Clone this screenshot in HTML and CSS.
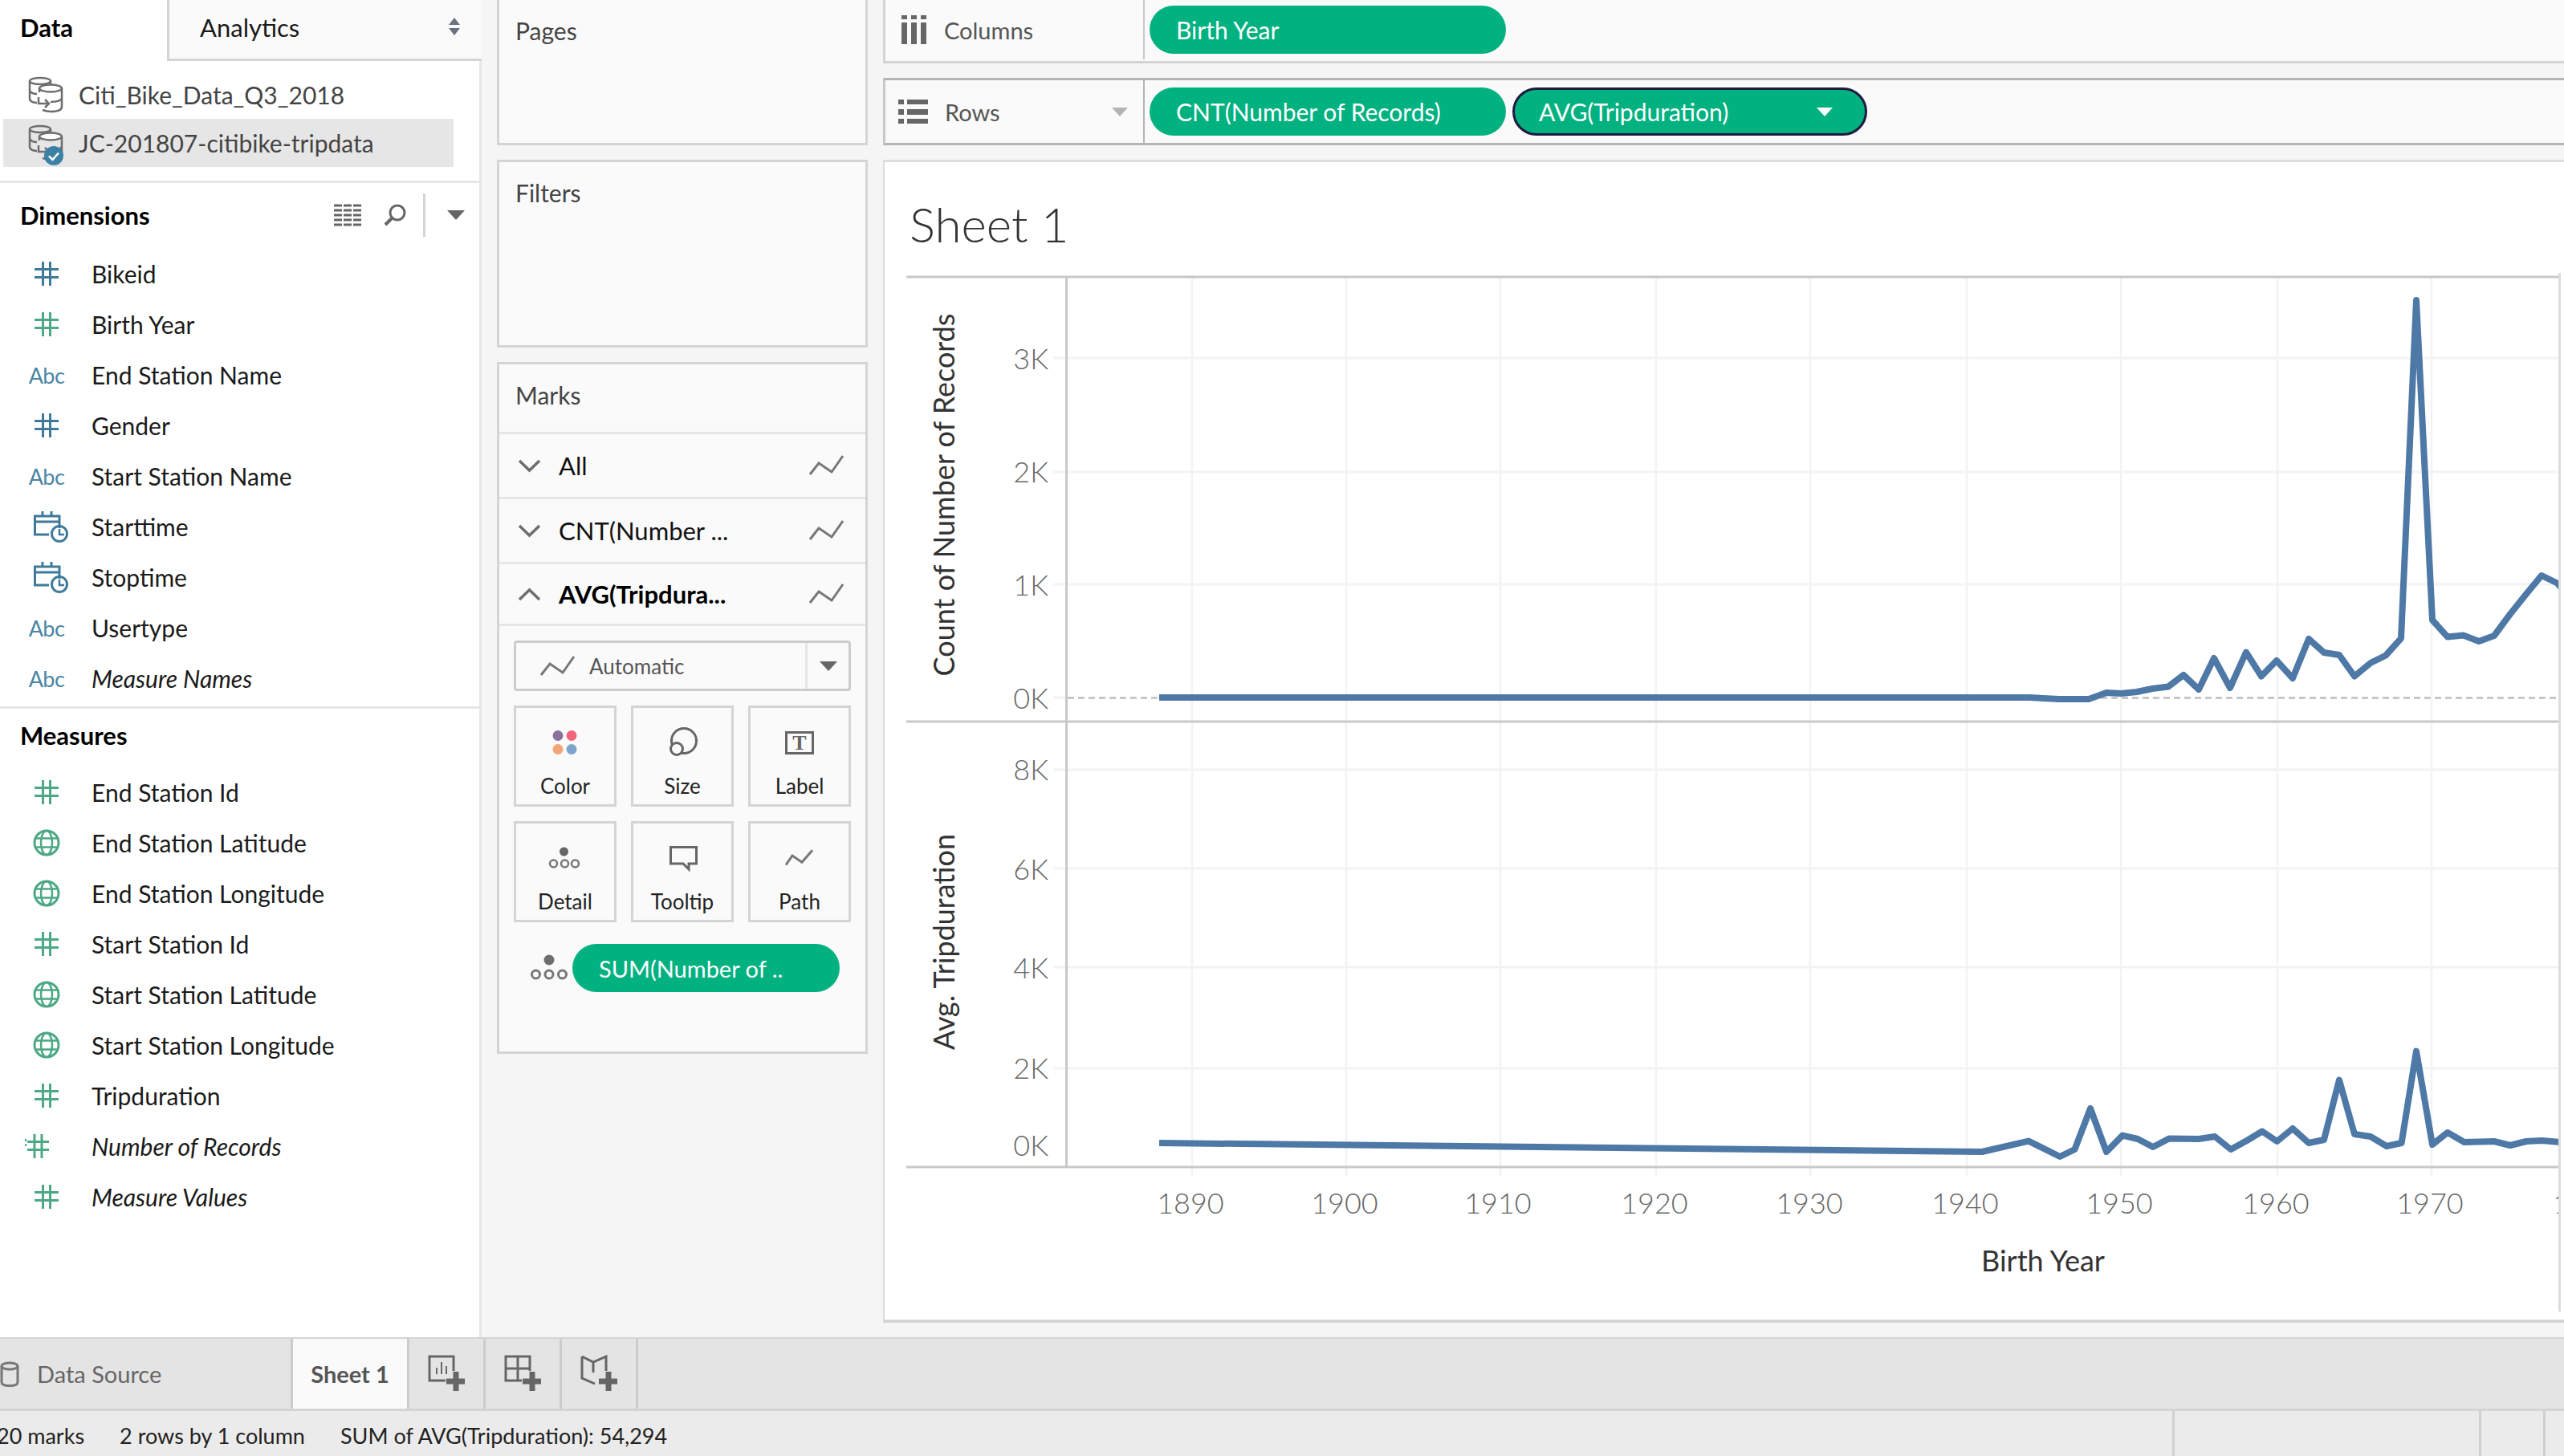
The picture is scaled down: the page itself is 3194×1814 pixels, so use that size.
FILE: index.html
```html
<!DOCTYPE html>
<html lang="en">
<head>
    <meta charset="UTF-8">
    <title>Sheet 1</title>
    <link rel="stylesheet" href="styles.css">
</head>
<body>
    <!-- shared icons -->
    <svg class="defs" width="0" height="0">
        <symbol id="i-hash" viewBox="0 0 30 30">
            <path d="M10.5 0V30M19.5 0V30M0 9.5H30M0 19.5H30" fill="none" stroke="currentColor" stroke-width="3"/>
        </symbol>
        <symbol id="i-calc" viewBox="0 0 42 30">
            <path d="M3 6H8M3 19.5H12" fill="none"/>
            <path d="M0 7.5H2M0 13.5H2" stroke="currentColor" stroke-width="3"/>
            <path d="M12 0V30M21 0V30M3 9.5H30M3 19.5H30" transform="translate(0 0)" fill="none" stroke="currentColor" stroke-width="3"/>
        </symbol>
        <symbol id="i-globe" viewBox="0 0 34 34">
            <circle cx="17" cy="17" r="15" fill="none" stroke="currentColor" stroke-width="3"/>
            <ellipse cx="17" cy="17" rx="7" ry="15" fill="none" stroke="currentColor" stroke-width="2.5"/>
            <path d="M3 11.5H31M3 22.5H31" fill="none" stroke="currentColor" stroke-width="2.5"/>
        </symbol>
        <symbol id="i-date" viewBox="0 0 44 40">
            <path d="M11 0V7M22 0V7M32 21V6H1.500V29H19M1.500 13H32" fill="none" stroke="currentColor" stroke-width="3"/>
            <circle cx="32" cy="28" r="9.500" fill="none" stroke="currentColor" stroke-width="3"/>
            <path d="M32 22V29H38" fill="none" stroke="currentColor" stroke-width="2.500"/>
        </symbol>
        <symbol id="i-db" viewBox="0 0 46 46">
            <g fill="none" stroke="#6e6e6e" stroke-width="2.500">
                <ellipse cx="17" cy="6" rx="13" ry="4"/>
                <path d="M4 6V28C4 31 8 33 13 33M30 6V10M4 17C4 20 8 22 13 22"/>
                <ellipse cx="30" cy="15" rx="14" ry="4.500" fill="#fff"/>
                <path d="M16 15V20M44 15V38C44 42 38 44 30 44C26 44 23 43 20 42M44 27C44 30 38 32 30 32"/>
                <path d="M15 26V34H28M23 29L28 34L23 39"/>
            </g>
        </symbol>
        <symbol id="i-line" viewBox="0 0 44 26">
            <polyline points="1,24 12,10 28,21 42,1" fill="none" stroke="#777" stroke-width="3"/>
        </symbol>
        <symbol id="i-detail" viewBox="0 0 48 48">
            <circle cx="24" cy="14" r="6.500" fill="#6e6e6e"/>
            <g fill="none" stroke="#777" stroke-width="3">
                <circle cx="7.500" cy="32" r="5"/>
                <circle cx="24" cy="32" r="5"/>
                <circle cx="40.500" cy="32" r="5"/>
            </g>
        </symbol>
    </svg>

    <div class="app">
        <aside class="sidebar">
            <div class="side-tabs">
                <div class="side-tab active">Data</div>
                <div class="side-tab">
                    Analytics
                    <svg class="sort-arrows" viewBox="0 0 16 22" width="16" height="22"><path d="M8 0L15 9H1ZM1 13H15L8 22Z" fill="#6b7280"/></svg>
                </div>
            </div>
            <div class="sources">
                <div class="source">
                    <svg class="source-icon" width="46" height="46"><use href="#i-db"/></svg>
                    Citi_Bike_Data_Q3_2018
                </div>
                <div class="source selected">
                    <svg class="source-icon" width="46" height="46"><use href="#i-db"/></svg>
                    <svg class="source-check" viewBox="0 0 24 24" width="24" height="24"><circle cx="12" cy="12" r="12" fill="#3b81a6"/><path d="M6 12.500L10.500 17L18 8.500" fill="none" stroke="#fff" stroke-width="2.500"/></svg>
                    JC-201807-citibike-tripdata
                </div>
            </div>

            <div class="section-head dims">
                <span>Dimensions</span>
                <div class="head-tools">
                    <svg width="36" height="28" viewBox="0 0 36 28">
                        <path d="M0 2H36M0 8H36M0 14H36M0 20H36M0 26H36" stroke="#666" stroke-width="3" stroke-dasharray="10 2"/>
                    </svg>
                    <svg class="tool-search" width="28" height="28" viewBox="0 0 28 28">
                        <circle cx="17" cy="11" r="9" fill="none" stroke="#666" stroke-width="3"/>
                        <path d="M10 18L2 26" stroke="#666" stroke-width="4"/>
                    </svg>
                    <div class="tool-sep"></div>
                    <div class="caret"></div>
                </div>
            </div>
            <div class="fields">
                <div class="field"><svg class="fi blue" width="30" height="30"><use href="#i-hash"/></svg>Bikeid</div>
                <div class="field"><svg class="fi green" width="30" height="30"><use href="#i-hash"/></svg>Birth Year</div>
                <div class="field"><span class="fi abc">Abc</span>End Station Name</div>
                <div class="field"><svg class="fi blue" width="30" height="30"><use href="#i-hash"/></svg>Gender</div>
                <div class="field"><span class="fi abc">Abc</span>Start Station Name</div>
                <div class="field"><svg class="fi blue date" width="44" height="40"><use href="#i-date"/></svg>Starttime</div>
                <div class="field"><svg class="fi blue date" width="44" height="40"><use href="#i-date"/></svg>Stoptime</div>
                <div class="field"><span class="fi abc">Abc</span>Usertype</div>
                <div class="field calc"><span class="fi abc">Abc</span>Measure Names</div>
            </div>

            <div class="section-head measures"><span>Measures</span></div>
            <div class="fields">
                <div class="field"><svg class="fi green" width="30" height="30"><use href="#i-hash"/></svg>End Station Id</div>
                <div class="field"><svg class="fi green" width="34" height="34"><use href="#i-globe"/></svg>End Station Latitude</div>
                <div class="field"><svg class="fi green" width="34" height="34"><use href="#i-globe"/></svg>End Station Longitude</div>
                <div class="field"><svg class="fi green" width="30" height="30"><use href="#i-hash"/></svg>Start Station Id</div>
                <div class="field"><svg class="fi green" width="34" height="34"><use href="#i-globe"/></svg>Start Station Latitude</div>
                <div class="field"><svg class="fi green" width="34" height="34"><use href="#i-globe"/></svg>Start Station Longitude</div>
                <div class="field"><svg class="fi green" width="30" height="30"><use href="#i-hash"/></svg>Tripduration</div>
                <div class="field calc"><svg class="fi green calc-icon" width="42" height="30"><use href="#i-calc"/></svg>Number of Records</div>
                <div class="field calc"><svg class="fi green" width="30" height="30"><use href="#i-hash"/></svg>Measure Values</div>
            </div>
        </aside>

        <section class="cards">
            <div class="card pages"><div class="card-title">Pages</div></div>
            <div class="card filters"><div class="card-title">Filters</div></div>
            <div class="card marks">
                <div class="card-title marks-title">Marks</div>
                <div class="mark-row">
                    <svg class="chev" width="29" height="17" viewBox="0 0 29 17"><polyline points="2,2 14.500,14 27,2" /></svg>
                    <span>All</span>
                    <svg width="44" height="26"><use href="#i-line"/></svg>
                </div>
                <div class="mark-row">
                    <svg class="chev" width="29" height="17" viewBox="0 0 29 17"><polyline points="2,2 14.500,14 27,2" /></svg>
                    <span>CNT(Number ...</span>
                    <svg width="44" height="26"><use href="#i-line"/></svg>
                </div>
                <div class="mark-row current">
                    <svg class="chev" width="29" height="17" viewBox="0 0 29 17"><polyline points="2,15 14.500,3 27,15" /></svg>
                    <span>AVG(Tripdura...</span>
                    <svg width="44" height="26"><use href="#i-line"/></svg>
                </div>
                <div class="marks-body">
                    <div class="mark-type">
                        <div class="mark-type-label">
                            <svg width="44" height="26"><use href="#i-line"/></svg>
                            Automatic
                        </div>
                        <div class="mark-type-btn"><div class="caret"></div></div>
                    </div>
                    <div class="mark-grid">
                        <div class="mark-btn">
                            <svg width="48" height="48" viewBox="0 0 48 48">
                                <circle cx="15" cy="15.500" r="6.500" fill="#8b6f9c"/>
                                <circle cx="32" cy="15.500" r="6.500" fill="#f1667b"/>
                                <circle cx="15" cy="32.500" r="6.500" fill="#f2a678"/>
                                <circle cx="32" cy="32.500" r="6.500" fill="#7ba5cd"/>
                            </svg>
                            Color
                        </div>
                        <div class="mark-btn">
                            <svg width="48" height="48" viewBox="0 0 48 48" fill="none" stroke="#666" stroke-width="3">
                                <circle cx="26" cy="22" r="15.500"/>
                                <circle cx="17" cy="32" r="7.500" fill="#fafafa"/>
                            </svg>
                            Size
                        </div>
                        <div class="mark-btn">
                            <svg width="48" height="48" viewBox="0 0 48 48">
                                <rect x="7.500" y="11.500" width="33" height="26" fill="none" stroke="#666" stroke-width="3"/>
                                <text class="label-t" x="24" y="33" text-anchor="middle">T</text>
                            </svg>
                            Label
                        </div>
                        <div class="mark-btn">
                            <svg width="48" height="48" viewBox="0 0 48 48">
                                <circle cx="22.500" cy="16" r="5.500" fill="#666"/>
                                <g fill="none" stroke="#777" stroke-width="2.500">
                                    <circle cx="9.500" cy="31" r="4.500"/>
                                    <circle cx="23.500" cy="31" r="4.500"/>
                                    <circle cx="36.500" cy="31" r="4.500"/>
                                </g>
                            </svg>
                            Detail
                        </div>
                        <div class="mark-btn">
                            <svg width="48" height="48" viewBox="0 0 48 48">
                                <path d="M9.500 10.500H41.500V31H32V38L25 31H9.500Z" fill="none" stroke="#666" stroke-width="3"/>
                            </svg>
                            Tooltip
                        </div>
                        <div class="mark-btn">
                            <svg width="48" height="48" viewBox="0 0 48 48">
                                <polyline points="7,32.700 15,21 27,29.300 40,14.300" fill="none" stroke="#777" stroke-width="3"/>
                            </svg>
                            Path
                        </div>
                    </div>
                    <div class="mark-pill-row">
                        <svg width="48" height="48"><use href="#i-detail"/></svg>
                        <div class="pill small">SUM(Number of ..</div>
                    </div>
                </div>
            </div>
        </section>

        <main class="workspace">
            <div class="shelf columns">
                <div class="shelf-label">
                    <svg width="32" height="36" viewBox="0 0 32 36" fill="#666">
                        <rect x="0" y="0" width="7" height="5"/><rect x="12" y="0" width="7" height="5"/><rect x="24" y="0" width="7" height="5"/>
                        <rect x="0" y="9" width="7" height="27"/><rect x="12" y="9" width="7" height="27"/><rect x="24" y="9" width="7" height="27"/>
                    </svg>
                    Columns
                </div>
                <div class="shelf-pills">
                    <div class="pill">Birth Year</div>
                </div>
            </div>
            <div class="shelf rows">
                <div class="shelf-label">
                    <svg width="37" height="30" viewBox="0 0 37 30" fill="#666">
                        <rect x="0" y="0" width="7" height="6"/><rect x="11" y="0" width="26" height="6"/>
                        <rect x="0" y="12" width="7" height="7"/><rect x="11" y="12" width="26" height="7"/>
                        <rect x="0" y="24" width="7" height="6"/><rect x="11" y="24" width="26" height="6"/>
                    </svg>
                    Rows
                    <div class="caret faint"></div>
                </div>
                <div class="shelf-pills">
                    <div class="pill">CNT(Number of Records)</div>
                    <div class="pill selected">AVG(Tripduration)<div class="caret white"></div></div>
                </div>
            </div>

            <div class="view">
                <h1 class="view-title">Sheet 1</h1>
                <svg class="chart" viewBox="1102 340 2092 1304" width="2092" height="1304">
                    <g class="grid-v">
                        <path d="M1485 346V1466M1677 346V1466M1869 346V1466M2063 346V1466M2255 346V1466M2450 346V1466M2642 346V1466M2837 346V1466M3029 346V1466"/>
                    </g>
                    <g class="grid-h">
                        <path d="M1312 446H3187M1312 588H3187M1312 728H3187M1312 869H1330"/>
                        <path d="M1312 959H3187M1312 1082H3187M1312 1205H3187M1312 1331H3187"/>
                    </g>
                    <path class="zero" d="M1330 869.500H3187"/>
                    <path class="axis" d="M1129 345H3187M1129 899H3187M1129 1454H3187M1328.500 345V1454"/>

                    <polyline class="series" points="1444,869 2528,869 2565,871 2602,871 2624,863 2642,864 2662,862 2681,858 2701,855.500 2720,841 2739,859 2758,820 2778,857 2798,812.600 2817,842.500 2836,823 2856,845 2876,796 2895,813 2914,816 2933,842.500 2953,826 2972,816.500 2991,795.400 3010,374 3030,772.500 3049,793.500 3068.500,791.600 3088,799 3107,792 3127,765 3147,740 3166,717 3185.500,726.500 3201,745"/>
                    <polyline class="series" points="1444,1424 2469,1435 2527,1421.600 2566,1441 2584.500,1432 2604,1381 2624,1435 2644,1414.600 2663,1419 2682,1429 2702,1418.500 2739,1419 2759,1416 2779,1432 2799,1421 2818,1409.500 2836.500,1422 2856,1406 2876,1424 2895,1420 2914,1345.600 2933,1413 2953,1416 2973,1428 2991.600,1424 3010,1309.600 3030,1426 3049,1411 3069.700,1423 3107,1422 3127,1427 3147,1422 3166.600,1421 3189,1423"/>

                    <g class="tick-y">
                        <text x="1306" y="460">3K</text>
                        <text x="1306" y="601">2K</text>
                        <text x="1306" y="742">1K</text>
                        <text x="1306" y="883">0K</text>
                        <text x="1306" y="972">8K</text>
                        <text x="1306" y="1096">6K</text>
                        <text x="1306" y="1219">4K</text>
                        <text x="1306" y="1344">2K</text>
                        <text x="1306" y="1440">0K</text>
                    </g>
                    <g class="tick-x">
                        <text x="1483" y="1512">1890</text>
                        <text x="1675" y="1512">1900</text>
                        <text x="1866" y="1512">1910</text>
                        <text x="2061" y="1512">1920</text>
                        <text x="2254" y="1512">1930</text>
                        <text x="2448" y="1512">1940</text>
                        <text x="2640" y="1512">1950</text>
                        <text x="2835" y="1512">1960</text>
                        <text x="3027" y="1512">1970</text>
                        <text x="3222" y="1512">1980</text>
                    </g>
                    <text class="axis-title" transform="translate(1189 616.500) rotate(-90)">Count of Number of Records</text>
                    <text class="axis-title" transform="translate(1189 1173.500) rotate(-90)">Avg. Tripduration</text>
                    <text class="axis-title" x="2545" y="1584">Birth Year</text>
                    <path class="view-edge" d="M3188.500 202V1634"/>
                    <rect class="view-edge-fill" x="3190" y="340" width="4" height="1304"/>
                </svg>
            </div>
        </main>
    </div>

    <div class="tabbar">
        <div class="tab source-tab">
            <svg width="26" height="32" viewBox="0 0 26 32" fill="none" stroke="#777" stroke-width="3">
                <ellipse cx="12" cy="6" rx="10" ry="4"/>
                <path d="M2 6V26C2 29 6 30.500 12 30.500C18 30.500 22 29 22 26V6"/>
            </svg>
            Data Source
        </div>
        <div class="tab sheet-tab">Sheet 1</div>
        <div class="tab icon-tab">
            <svg width="46" height="46" viewBox="0 0 46 46" fill="none" stroke="#666" stroke-width="3">
                <path d="M32 20V2H2V32H22"/>
                <path d="M11 24V16M17 24V9M23 24V14" stroke-width="2"/>
                <path d="M35 21V45M23 33H46" stroke-width="7"/>
            </svg>
        </div>
        <div class="tab icon-tab">
            <svg width="46" height="46" viewBox="0 0 46 46" fill="none" stroke="#666" stroke-width="3">
                <path d="M32 20V2H2V32H22M2 17H32M17 2V32"/>
                <path d="M35 21V45M23 33H46" stroke-width="7"/>
            </svg>
        </div>
        <div class="tab icon-tab">
            <svg width="46" height="46" viewBox="0 0 46 46" fill="none" stroke="#666" stroke-width="3">
                <path d="M2 2L16 9L32 2V20M2 2V29L18 36M16 9V22"/>
                <path d="M35 21V45M23 33H46" stroke-width="7"/>
            </svg>
        </div>
    </div>

    <footer class="statusbar">
        <div class="status-main">
            <span>20 marks</span>
            <span>2 rows by 1 column</span>
            <span>SUM of AVG(Tripduration): 54,294</span>
        </div>
        <div class="status-cell wide"></div>
        <div class="status-cell mid"></div>
        <div class="status-cell end"></div>
    </footer>
</body>
</html>
```

FILE: styles.css
```css
* {
    box-sizing: border-box;
}
html, body {
    margin: 0;
    padding: 0;
}
body {
    width: 3194px;
    height: 1814px;
    overflow: hidden;
    display: flex;
    flex-direction: column;
    font-family: Lato, "Open Sans", sans-serif;
    font-size: 30px;
    color: #1a1a1a;
    background-color: #f5f5f5;
}
.defs {
    position: absolute;
}
.app {
    display: flex;
    height: 1668px;
    border-bottom: 2px solid #d4d4d4;
}

/* left data pane */
.sidebar {
    width: 600px;
    flex: none;
    background-color: #fff;
    border-right: 3px solid #e6e6e6;
}
.side-tabs {
    display: flex;
    height: 76px;
    margin-right: -3px;
}
.side-tab {
    position: relative;
    padding-top: 16px;
    line-height: 36px;
    font-size: 31px;
}
.side-tab.active {
    width: 208px;
    padding-left: 25px;
    font-weight: 700;
    color: #000;
}
.side-tab:not(.active) {
    flex: 1;
    padding-left: 38px;
    background-color: #fafafa;
    border-left: 3px solid #d4d4d4;
    border-bottom: 3px solid #d4d4d4;
}
.sort-arrows {
    position: absolute;
    right: 26px;
    top: 22px;
}
.sources {
    padding: 12px 0 17px;
    border-bottom: 3px solid #e6e6e6;
}
.source {
    position: relative;
    display: flex;
    align-items: center;
    gap: 19px;
    height: 60px;
    width: 561px;
    margin-left: 4px;
    padding-left: 29px;
    color: #444;
}
.source.selected {
    background-color: #e6e6e6;
}
.source-check {
    position: absolute;
    left: 51px;
    top: 34px;
}
.section-head {
    display: flex;
    justify-content: space-between;
    padding-left: 25px;
    font-size: 31px;
    font-weight: 700;
    line-height: 36px;
    color: #000;
}
.section-head.dims {
    height: 81px;
    padding-top: 22px;
}
.section-head.measures {
    height: 75px;
    padding-top: 15px;
    border-top: 3px solid #e6e6e6;
    margin-top: 4px;
}
.head-tools {
    position: relative;
    display: flex;
    align-items: center;
    height: 54px;
    margin-top: -9px;
    padding-right: 18px;
}
.tool-search {
    margin-left: 26px;
}
.tool-sep {
    width: 3px;
    height: 54px;
    margin: 0 27px 0 21px;
    background-color: #d4d4d4;
}
.caret {
    width: 0;
    height: 0;
    border-left: 11px solid transparent;
    border-right: 11px solid transparent;
    border-top: 12px solid #666;
}
.caret.faint {
    margin-left: auto;
    margin-right: 19px;
    border-left-width: 10px;
    border-right-width: 10px;
    border-top: 11px solid #b4b4b4;
}
.caret.white {
    margin-left: auto;
    border-left-width: 10px;
    border-right-width: 10px;
    border-top: 11px solid #fff;
}
.field {
    position: relative;
    display: flex;
    align-items: center;
    height: 63px;
    padding-left: 114px;
}
.field.calc {
    font-style: italic;
}
.fi {
    position: absolute;
    left: 58px;
    top: 50%;
    transform: translate(-50%, -50%);
}
.fi.blue {
    color: #3f7a9a;
}
.fi.green {
    color: #4ca983;
}
.fi.date {
    left: 64px;
    top: 33px;
}
.fi.calc-icon {
    left: 52px;
}
.abc {
    left: 58px;
    font-size: 27px;
    font-style: normal;
    letter-spacing: -0.5px;
    color: #4a86a5;
}

/* pages / filters / marks */
.cards {
    width: 500px;
    flex: none;
    display: flex;
    flex-direction: column;
    gap: 18px;
    padding-left: 19px;
    padding-right: 19px;
}
.card {
    background-color: #fafafa;
    border: 3px solid #d4d4d4;
    color: #444;
}
.card.pages {
    height: 181px;
    border-top: none;
    padding-top: 20px;
}
.card.filters {
    height: 234px;
    padding-top: 20px;
}
.card.marks {
    height: 862px;
}
.card-title {
    padding-left: 20px;
    line-height: 36px;
}
.marks-title {
    height: 87px;
    padding-top: 20px;
    border-bottom: 3px solid #e6e6e6;
}
.mark-row {
    display: flex;
    align-items: center;
    height: 81px;
    padding: 0 26px 0 23px;
    border-bottom: 3px solid #e6e6e6;
    font-size: 31px;
    color: #111;
}
.mark-row span {
    flex: 1;
    margin-left: 22px;
}
.mark-row.current {
    height: 77px;
    font-weight: 700;
    color: #000;
}
.chev {
    fill: none;
    stroke: #6e6e6e;
    stroke-width: 3.5px;
}
.marks-body {
    padding: 18px 18px 0;
}
.mark-type {
    display: flex;
    height: 63px;
    border: 3px solid #ccc;
    border-radius: 4px;
    font-size: 26px;
    color: #555;
}
.mark-type-label {
    flex: 1;
    display: flex;
    align-items: center;
    gap: 17px;
    padding-left: 30px;
}
.mark-type-btn {
    width: 54px;
    display: flex;
    align-items: center;
    justify-content: center;
    border-left: 3px solid #e6e6e6;
}
.mark-grid {
    display: grid;
    grid-template-columns: repeat(3, 1fr);
    grid-auto-rows: 126px;
    gap: 18px;
    margin-top: 18px;
}
.mark-btn {
    display: flex;
    flex-direction: column;
    align-items: center;
    padding-top: 19px;
    border: 3px solid #d4d4d4;
    font-size: 26px;
    line-height: 32px;
    color: #222;
}
.mark-btn svg {
    margin-bottom: 14px;
}
.label-t {
    font-family: "Liberation Serif", serif;
    font-size: 26px;
    font-weight: 700;
    fill: #666;
}
.mark-pill-row {
    display: flex;
    align-items: center;
    gap: 5px;
    margin-top: 27px;
    padding-left: 20px;
}
.pill {
    display: flex;
    align-items: center;
    width: 444px;
    height: 60px;
    padding: 0 33px;
    border-radius: 30px;
    background-color: #02b180;
    color: #fff;
    font-size: 30px;
    white-space: nowrap;
}
.pill.small {
    width: 333px;
    font-size: 29px;
}
.pill.selected {
    width: 442px;
    margin-left: 8px;
    padding-right: 40px;
    border: 3px solid #1f1a3f;
    padding-left: 30px;
}

/* shelves and view */
.workspace {
    flex: 1;
    min-width: 0;
    display: flex;
    flex-direction: column;
}
.shelf {
    display: flex;
    background-color: #fafafa;
    border-left: 3px solid #d4d4d4;
    border-bottom: 3px solid #d4d4d4;
    color: #555;
}
.shelf.columns {
    height: 79px;
    padding-bottom: 2px;
}
.shelf.rows {
    height: 84px;
    margin-top: 18px;
    border-top: 3px solid #b4b4b4;
    border-bottom-color: #b4b4b4;
    border-left-color: #c8c8c8;
}
.shelf-label {
    width: 323px;
    flex: none;
    display: flex;
    align-items: center;
    gap: 21px;
    padding-left: 20px;
    border-right: 2px solid #c8c8c8;
    font-size: 29px;
}
.shelf.rows .shelf-label {
    padding-left: 16px;
    gap: 21px;
    border-right-color: #b4b4b4;
}
.shelf-pills {
    display: flex;
    align-items: center;
    padding-left: 6px;
}
.view {
    height: 1449px;
    margin-top: 18px;
    margin-bottom: 0;
    background-color: #fff;
    border-top: 3px solid #dcdcdc;
    border-left: 2px solid #dcdcdc;
    border-bottom: 4px solid #d4d4d4;
    display: flex;
    flex-direction: column;
}
.view-title {
    height: 138px;
    margin: 0;
    padding: 41px 0 0 31px;
    font-size: 60px;
    font-weight: 300;
    line-height: 72px;
    color: #333;
}
.chart {
    display: block;
    font-family: Lato, "Open Sans", sans-serif;
}
.grid-v path {
    fill: none;
    stroke: #f3f3f3;
    stroke-width: 2.5px;
}
.grid-h path {
    fill: none;
    stroke: #f3f3f3;
    stroke-width: 3px;
}
.zero {
    fill: none;
    stroke: #c8c8c8;
    stroke-width: 3px;
    stroke-dasharray: 8 5;
}
.axis {
    fill: none;
    stroke: #c8c8c8;
    stroke-width: 3px;
}
.series {
    fill: none;
    stroke: #4e79a7;
    stroke-width: 8px;
    stroke-linejoin: round;
}
.tick-y text {
    text-anchor: end;
    font-size: 36px;
    font-weight: 300;
    fill: #666;
}
.tick-x text {
    text-anchor: middle;
    font-size: 36px;
    font-weight: 300;
    fill: #666;
}
.axis-title {
    text-anchor: middle;
    font-size: 36px;
    fill: #333;
}
.view-edge {
    fill: none;
    stroke: #dcdcdc;
    stroke-width: 3px;
}
.view-edge-fill {
    fill: #fff;
}

/* bottom tabs and status */
.tabbar {
    display: flex;
    height: 90px;
    background-color: #e4e4e4;
    border-bottom: 3px solid #d4d4d4;
    flex: none;
}
.tab {
    display: flex;
    align-items: center;
    justify-content: center;
}
.source-tab {
    width: 362px;
    justify-content: flex-start;
    gap: 20px;
    color: #666;
    font-size: 29px;
}
.sheet-tab {
    width: 148px;
    background-color: #fafafa;
    border-left: 3px solid #ccc;
    border-right: 3px solid #ccc;
    color: #555;
    font-size: 29px;
    font-weight: 700;
}
.icon-tab {
    width: 95px;
    border-right: 3px solid #ccc;
    padding-bottom: 2px;
}
.statusbar {
    flex: 1;
    display: flex;
    background-color: #ebebeb;
    font-size: 27px;
    color: #222;
}
.status-main {
    width: 2710px;
    flex: none;
    display: flex;
    align-items: center;
    gap: 44px;
    margin-left: -4px;
    padding-top: 4px;
}
.status-cell {
    border-left: 3px solid #d0d0d0;
}
.status-cell.wide {
    width: 382px;
}
.status-cell.mid {
    width: 80px;
}
.status-cell.end {
    flex: 1;
}
```
